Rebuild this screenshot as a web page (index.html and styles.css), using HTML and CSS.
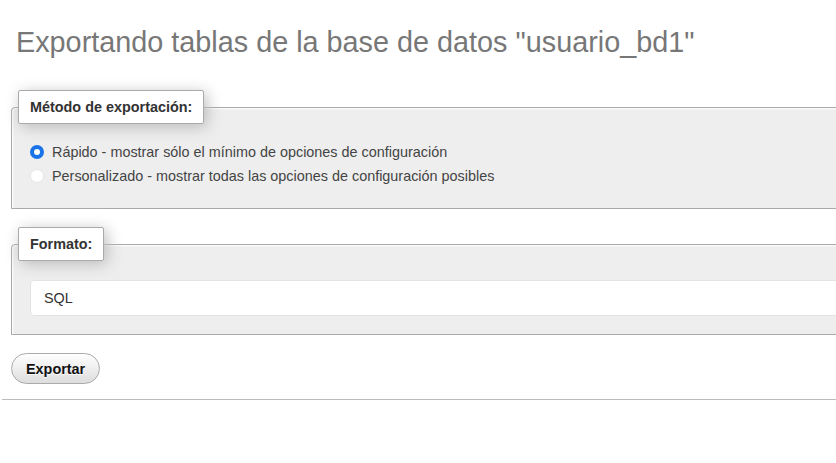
FILE: index.html
```html
<!DOCTYPE html>
<html lang="es">
<head>
    <meta charset="UTF-8">
    <title>Exportar</title>
    <link rel="stylesheet" href="styles.css">
</head>
<body>
    <div class="page">
        <div class="export">
            <h2>Exportando tablas de la base de datos "usuario_bd1"</h2>

            <form class="export-form">
                <fieldset>
                    <legend>Método de exportación:</legend>
                    <div class="options">
                        <label class="option">
                            <input type="radio" name="quick_or_custom" value="quick" checked>
                            Rápido - mostrar sólo el mínimo de opciones de configuración
                        </label>
                        <label class="option">
                            <input type="radio" name="quick_or_custom" value="custom">
                            Personalizado - mostrar todas las opciones de configuración posibles
                        </label>
                    </div>
                </fieldset>

                <fieldset>
                    <legend>Formato:</legend>
                    <div class="options">
                        <select name="what" class="format">
                            <option value="sql">SQL</option>
                        </select>
                    </div>
                </fieldset>

                <button type="submit" class="btn">Exportar</button>
            </form>
        </div>
        <hr>
    </div>
</body>
</html>
```

FILE: styles.css
```css
html, body{
    overflow: hidden;
}
body{
    margin: 0;
    font-family: 'Liberation Sans', Arial, sans-serif;
    font-size: 14.4px;
    color: #444;
    background: #fff;
}
.page{
    width: 1000px;
    padding-left: 2px;
}
.export{
    padding-left: 9px;
}
h2{
    margin: 26px 0 32px 5px;
    font-size: 28.8px;
    line-height: 32px;
    font-weight: normal;
    color: #777;
}
.export-form{
    display: flex;
    flex-direction: column;
    align-items: flex-start;
}
fieldset{
    box-sizing: border-box;
    width: 100%;
    margin: 0 0 18px 0;
    padding: 0 6px;
    border: 1px solid #aaa;
    border-radius: 4px 4px 0 0;
    background: #eee;
    box-shadow: 1px 1px 2px #fff inset;
}
legend{
    padding: 5px 11px;
    font-weight: bold;
    line-height: 22px;
    color: #333;
    background: #fff;
    border: 1px solid #aaa;
    border-radius: 2px;
    box-shadow: 3px 3px 15px #bbb;
}
.options{
    padding: 16px 0 20px 12px;
}
fieldset + fieldset .options{
    padding: 19px 0 18px 12px;
}
.option{
    display: flex;
    align-items: center;
    gap: 8px;
    line-height: 24px;
}
.option input{
    appearance: none;
    box-sizing: border-box;
    width: 14px;
    height: 14px;
    margin: 0;
    border-radius: 50%;
    border: 1px solid #e6e6e6;
    background: #fff;
}
.option input:checked{
    border: 4px solid #1a73e8;
}
.format{
    appearance: none;
    box-sizing: border-box;
    display: block;
    width: 100%;
    height: 36px;
    padding: 0 13px;
    font-family: inherit;
    font-size: 14.4px;
    color: #333;
    background: #fff;
    border: 1px solid #e3e3e3;
    border-radius: 4px;
}
.btn{
    height: 31px;
    padding: 0 14px;
    font-family: inherit;
    font-size: 14.4px;
    font-weight: bold;
    color: #111;
    border: 1px solid #aaa;
    border-radius: 85px;
    background: linear-gradient(#fff, #ddd);
    text-shadow: 0 1px 0 #fff;
    cursor: pointer;
}
hr{
    margin: 15px 0 0 0;
    border: none;
    border-top: 1px solid #bbb;
}
```
